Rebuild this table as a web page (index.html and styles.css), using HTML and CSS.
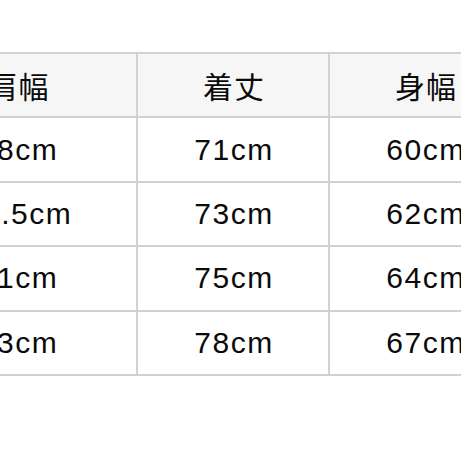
FILE: index.html
```html
<!DOCTYPE html>
<html lang="ja">
<head>
<meta charset="utf-8">
<link rel="stylesheet" href="styles.css">
</head>
<body>
<div class="sheet">
  <div class="cell head">肩幅</div>
  <div class="cell head">着丈</div>
  <div class="cell head">身幅</div>
  <div class="cell">48cm</div>
  <div class="cell">71cm</div>
  <div class="cell">60cm</div>
  <div class="cell">49.5cm</div>
  <div class="cell">73cm</div>
  <div class="cell">62cm</div>
  <div class="cell">51cm</div>
  <div class="cell">75cm</div>
  <div class="cell">64cm</div>
  <div class="cell">53cm</div>
  <div class="cell">78cm</div>
  <div class="cell">67cm</div>
</div>
</body>
</html>
```
FILE: styles.css
```css
html, body {
  margin: 0;
  padding: 0;
  background: #ffffff;
  overflow: hidden;
  width: 461px;
  height: 461px;
}
.sheet {
  margin-top: 52px;
  margin-left: -103px;
  width: max-content;
  display: grid;
  grid-template-columns: 237px 190px 190px;
  grid-auto-rows: 62.4px;
  gap: 2px;
  padding: 2px;
  background: #d2d2d2;
  font-family: "Liberation Sans", "Noto Sans CJK JP", sans-serif;
  font-size: 30px;
  letter-spacing: 1.5px;
  color: #0a0a0a;
}
.cell {
  background: #ffffff;
  display: flex;
  align-items: center;
  justify-content: center;
  padding-left: 2px;
}
.head {
  background: #f6f6f6;
  font-family: "Noto Sans CJK JP", sans-serif;
  font-size: 30px;
  letter-spacing: 1px;
}
```
